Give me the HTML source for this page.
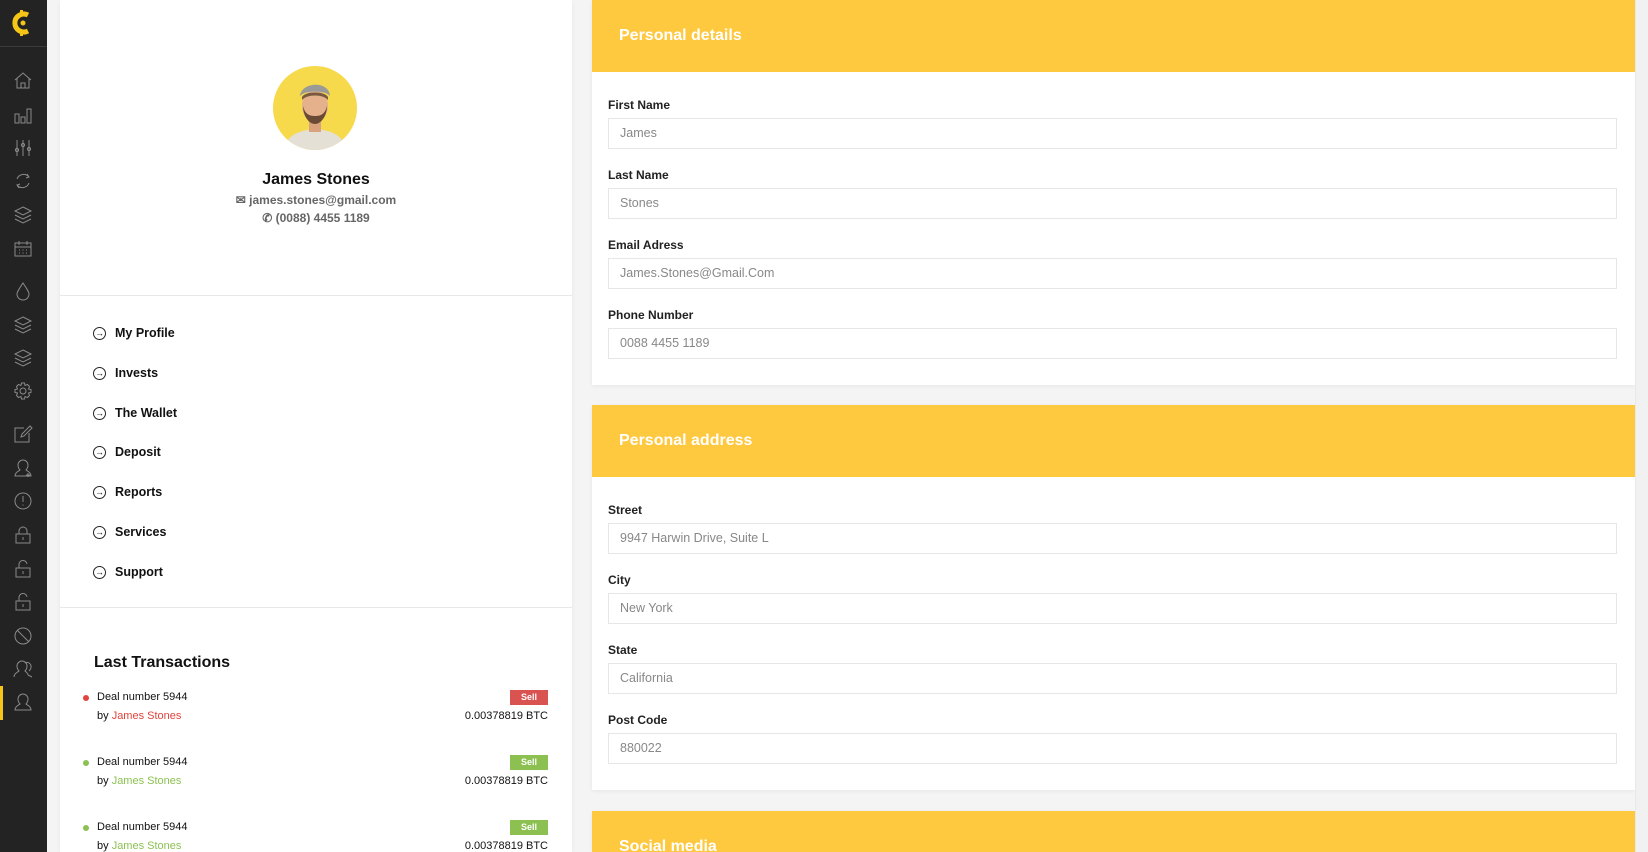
<!DOCTYPE html>
<html style="overflow:hidden;height:852px"><head><meta charset="utf-8"><style>
*{box-sizing:border-box;margin:0;padding:0}
body{width:1648px;height:852px;overflow:hidden;background:#f4f4f4;font-family:"Liberation Sans",sans-serif;position:relative;color:#111}
.abs{position:absolute}
#side{left:0;top:0;width:47px;height:852px;background:#232323}
#side svg{position:absolute;left:13px}
.card{background:#fff;position:absolute;box-shadow:0 1px 4px rgba(0,0,0,.06)}
.hd{position:absolute;left:0;right:0;top:0;height:72px;background:#fec83f;color:#fff;font-weight:bold;font-size:16px;padding-left:27px;line-height:72px}
.lbl{position:absolute;left:16px;font-size:12px;font-weight:bold;color:#222}
.inp{position:absolute;left:16px;width:1009px;height:31px;border:1px solid #e6e6e6;font-size:12.5px;color:#888;padding-left:11px;line-height:29px}
.mi{position:absolute;left:55px;font-size:12.5px;font-weight:bold;color:#111}
.mi i{position:absolute;left:-22px;top:1px;width:13px;height:13px;border:1.2px solid #222;border-radius:50%;font-style:normal;font-size:9px;line-height:10px;text-align:center}
.tx{position:absolute;left:0;width:488px;height:40px;font-size:11px}
.dot{position:absolute;left:23px;width:6px;height:6px;border-radius:50%}
.badge{position:absolute;left:450px;width:38px;height:15px;color:#fff;font-size:9px;font-weight:bold;text-align:center;line-height:15px}
</style></head><body>
<div id="side" class="abs">
 <div class="abs" style="left:0;top:46px;width:47px;height:1px;background:#3a3a3a"></div>
 <svg style="left:11px;top:9px" width="25" height="28" viewBox="0 0 25 28"><path d="M17 6 A9 9 0 1 0 17 22" fill="none" stroke="#f5c518" stroke-width="5"/><circle cx="12" cy="14" r="2.5" fill="#f5c518"/><rect x="9" y="1" width="3" height="4" fill="#f5c518"/><rect x="9" y="23" width="3" height="4" fill="#f5c518"/></svg>
 <div class="abs" style="left:0;top:686px;width:3px;height:34px;background:#f5c518"></div>
 <svg style="top:71px" width="20" height="640" viewBox="0 0 20 640" fill="none" stroke="#8a8a8a" stroke-width="1">
  <path d="M2 9 L10 2 L18 9 M4 7 V17 H16 V7 M8 17 V12 H12 V17"/>
  <g transform="translate(0,35)"><rect x="2" y="8" width="4" height="9"/><rect x="8" y="11" width="4" height="6"/><rect x="14" y="3" width="4" height="14"/></g>
  <g transform="translate(0,67)"><path d="M4 2V18M10 2V18M16 2V18"/><circle cx="4" cy="12" r="1.6"/><circle cx="10" cy="7" r="1.6"/><circle cx="16" cy="11" r="1.6"/></g>
  <g transform="translate(0,100)"><path d="M4 8 A7 7 0 0 1 16 6 M16 12 A7 7 0 0 1 4 14 M14 3 L16 6 L13 7 M6 17 L4 14 L7 13"/></g>
  <g transform="translate(0,134)"><path d="M10 2 L18 6 L10 10 L2 6Z M2 10 L10 14 L18 10 M2 14 L10 18 L18 14"/></g>
  <g transform="translate(0,168)"><rect x="2" y="4" width="16" height="13"/><path d="M6 2V6M14 2V6M2 8H18M6 11H7M9.5 11H10.5M13 11H14M6 14H7M9.5 14H10.5M13 14H14"/></g>
  <g transform="translate(0,210)"><path d="M10 2 C6 8 4 11 4 13 A6 6 0 0 0 16 13 C16 11 14 8 10 2Z"/></g>
  <g transform="translate(0,244)"><path d="M10 2 L18 6 L10 10 L2 6Z M2 10 L10 14 L18 10 M2 14 L10 18 L18 14"/></g>
  <g transform="translate(0,277)"><path d="M10 2 L18 6 L10 10 L2 6Z M2 10 L10 14 L18 10 M2 14 L10 18 L18 14"/></g>
  <g transform="translate(0,310)"><circle cx="10" cy="10" r="3"/><path d="M8.5 2H11.5L12 4.5L14.5 3.5L16.5 5.5L15.5 8L18 8.5V11.5L15.5 12L16.5 14.5L14.5 16.5L12 15.5L11.5 18H8.5L8 15.5L5.5 16.5L3.5 14.5L4.5 12L2 11.5V8.5L4.5 8L3.5 5.5L5.5 3.5L8 4.5Z"/></g>
  <g transform="translate(0,353)"><path d="M11 4H2V18H16V9 M8 13 L9 10 L17 2 L19 4 L11 12Z"/></g>
  <g transform="translate(0,387)"><path d="M2 18 C2 14 6 13 7 12 C5 10 5 8 5 7 A5 5 0 0 1 15 7 C15 8 15 10 13 12 C14 13 18 14 18 18Z M15 15V19M13 17H17"/></g>
  <g transform="translate(0,420)"><circle cx="10" cy="10" r="8"/><path d="M10 5V11M10 13.5V14.5"/></g>
  <g transform="translate(0,454)"><rect x="3" y="9" width="14" height="9"/><path d="M6 9V6A4 4 0 0 1 14 6V9M10 12V15"/></g>
  <g transform="translate(0,488)"><rect x="3" y="9" width="14" height="9"/><path d="M6 9V6A4 4 0 0 1 14 5M10 12V15"/></g>
  <g transform="translate(0,521)"><rect x="3" y="9" width="14" height="9"/><path d="M6 9V6A4 4 0 0 1 14 5M10 12V15"/></g>
  <g transform="translate(0,555)"><circle cx="10" cy="10" r="8"/><path d="M4.5 4.5 L15.5 15.5"/></g>
  <g transform="translate(0,588)"><path d="M1 18 C1 14 5 13 6 12 C4 10 4 8 4 7 A5 5 0 0 1 14 7 C14 8 14 10 12 12 C13 13 15 14 15 16 M15 16 L19 18 M12 4 A4 4 0 0 1 18 8 C18 10 17 11 16 12"/></g>
  <g transform="translate(0,621)"><path d="M2 18 C2 14 6 13 7 12 C5 10 5 8 5 7 A5 5 0 0 1 15 7 C15 8 15 10 13 12 C14 13 18 14 18 18Z"/></g>
 </svg>
</div>

<div class="card" style="left:60px;top:0;width:512px;height:852px">
 <svg class="abs" style="left:213px;top:66px" width="84" height="84" viewBox="0 0 84 84">
  <defs><clipPath id="c"><circle cx="42" cy="42" r="42"/></clipPath></defs>
  <g clip-path="url(#c)"><rect width="84" height="84" fill="#f7d94c"/>
  <path d="M10 84 C14 68 28 64 42 63 C56 64 70 68 74 84Z" fill="#e4e0d6"/>
  <rect x="36" y="52" width="12" height="14" fill="#d9a27c"/>
  <ellipse cx="42" cy="40" rx="13" ry="16" fill="#e5b08c"/>
  <path d="M30 40 C30 50 36 58 42 58 C48 58 54 50 54 40 C52 48 48 50 42 50 C36 50 32 48 30 40Z" fill="#6b4a35"/>
  <path d="M27 30 C28 16 56 14 57 30 C52 24 32 24 27 30Z" fill="#9a9a96"/>
  <path d="M29 31 C32 25 52 25 55 31 L55 34 C50 28 34 28 29 34Z" fill="#7a5a3e"/></g>
 </svg>
 <div class="abs" style="left:0;width:512px;top:171px;text-align:center;font-size:16px;font-weight:bold;color:#111">James Stones</div>
 <div class="abs" style="left:0;width:512px;top:193px;text-align:center;font-size:12px;font-weight:bold;color:#666">✉ james.stones@gmail.com</div>
 <div class="abs" style="left:0;width:512px;top:211px;text-align:center;font-size:12px;font-weight:bold;color:#666">✆ (0088) 4455 1189</div>
 <div class="abs" style="left:0;top:295px;width:512px;height:1px;background:#e8e8e8"></div>
 <div class="mi" style="top:326px"><i>→</i>My Profile</div>
 <div class="mi" style="top:366px"><i>→</i>Invests</div>
 <div class="mi" style="top:406px"><i>→</i>The Wallet</div>
 <div class="mi" style="top:445px"><i>→</i>Deposit</div>
 <div class="mi" style="top:485px"><i>→</i>Reports</div>
 <div class="mi" style="top:525px"><i>→</i>Services</div>
 <div class="mi" style="top:565px"><i>→</i>Support</div>
 <div class="abs" style="left:0;top:607px;width:512px;height:1px;background:#e8e8e8"></div>
 <div class="abs" style="left:34px;top:654px;font-size:16px;font-weight:bold">Last Transactions</div>

 <div class="tx" style="top:690px"><div class="dot" style="top:5px;background:#e0443c"></div><div class="abs" style="left:37px;top:1px">Deal number 5944</div><div class="badge" style="top:0;background:#d95350">Sell</div><div class="abs" style="left:37px;top:20px">by <span style="color:#e0443c">James Stones</span></div><div class="abs" style="right:0;top:20px">0.00378819 BTC</div></div>
 <div class="tx" style="top:755px"><div class="dot" style="top:5px;background:#8cc152"></div><div class="abs" style="left:37px;top:1px">Deal number 5944</div><div class="badge" style="top:0;background:#8cc152">Sell</div><div class="abs" style="left:37px;top:20px">by <span style="color:#8cc152">James Stones</span></div><div class="abs" style="right:0;top:20px">0.00378819 BTC</div></div>
 <div class="tx" style="top:820px"><div class="dot" style="top:5px;background:#8cc152"></div><div class="abs" style="left:37px;top:1px">Deal number 5944</div><div class="badge" style="top:0;background:#8cc152">Sell</div><div class="abs" style="left:37px;top:20px">by <span style="color:#8cc152">James Stones</span></div><div class="abs" style="right:0;top:20px">0.00378819 BTC</div></div>
</div>

<div class="card" style="left:592px;top:0;width:1043px;height:385px">
 <div class="hd">Personal details</div>
 <div class="lbl" style="top:98px">First Name</div><div class="inp" style="top:118px">James</div>
 <div class="lbl" style="top:168px">Last Name</div><div class="inp" style="top:188px">Stones</div>
 <div class="lbl" style="top:238px">Email Adress</div><div class="inp" style="top:258px">James.Stones@Gmail.Com</div>
 <div class="lbl" style="top:308px">Phone Number</div><div class="inp" style="top:328px">0088 4455 1189</div>
</div>
<div class="card" style="left:592px;top:405px;width:1043px;height:385px">
 <div class="hd">Personal address</div>
 <div class="lbl" style="top:98px">Street</div><div class="inp" style="top:118px">9947 Harwin Drive, Suite L</div>
 <div class="lbl" style="top:168px">City</div><div class="inp" style="top:188px">New York</div>
 <div class="lbl" style="top:238px">State</div><div class="inp" style="top:258px">California</div>
 <div class="lbl" style="top:308px">Post Code</div><div class="inp" style="top:328px">880022</div>
</div>
<div class="card" style="left:592px;top:811px;width:1043px;height:41px;overflow:hidden">
 <div class="hd">Social media</div>
</div>
<div class="abs" style="left:1635px;top:0;width:13px;height:852px;background:#f1f1f1;border-left:1px solid #e8e8e8"></div>
</body></html>
